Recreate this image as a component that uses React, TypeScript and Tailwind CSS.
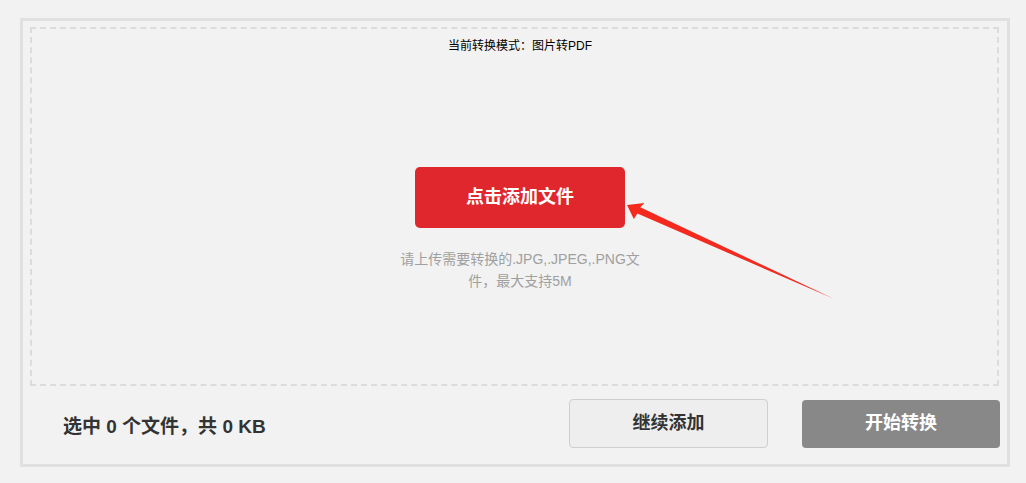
export default function App() {
  return (
    <div className="relative h-[483px] w-[1026px] bg-[#f2f2f2] pl-[20px] pt-[18px] font-['Liberation_Sans','Noto_Sans_CJK_SC',sans-serif]">
      <div className="flex h-[449px] w-[990px] flex-col border-[3px] border-[#e0e0e0] pl-[7px] pt-[6px]">
        {/* Upload area */}
        <div className="flex h-[359px] w-[969px] flex-col items-center border-2 border-dashed border-[#dcdcdc] pl-[11px]">
          <p className="mt-[10px] text-[12px] leading-[14px] text-black">当前转换模式：图片转PDF</p>
          <button className="mt-[114px] flex h-[61px] w-[210px] items-center justify-center rounded-[5px] bg-[#e1272e] text-[18px] font-bold text-white">
            点击添加文件
          </button>
          <p className="mt-[20px] text-center text-[14px] leading-[22px] text-[#a0a0a0]">
            请上传需要转换的.JPG,.JPEG,.PNG文
            <br />
            件，最大支持5M
          </p>
        </div>

        {/* Footer */}
        <div className="flex items-center pt-[13px]">
          <span className="ml-[33px] mt-[7px] text-[19px] font-bold text-[#333]">选中 0 个文件，共 0 KB</span>
          <button className="ml-auto flex h-[49px] w-[199px] items-center justify-center rounded-[4px] border border-[#cfcfcf] bg-[#eeeeee] text-[18px] font-bold text-[#333]">
            继续添加
          </button>
          <button className="ml-[34px] mr-[7px] flex h-[48px] w-[198px] items-center justify-center rounded-[4px] bg-[#888888] text-[18px] font-bold text-white">
            开始转换
          </button>
        </div>
      </div>

      {/* Annotation arrow */}
      <svg className="pointer-events-none absolute left-0 top-0" width="1026" height="483">
        <g transform="translate(627 205) rotate(24.4)">
          <polygon points="0,0 15,-9 13,-3.5 227,0 13,3.5 12,10" fill="#f42a1f" />
        </g>
      </svg>
    </div>
  );
}
